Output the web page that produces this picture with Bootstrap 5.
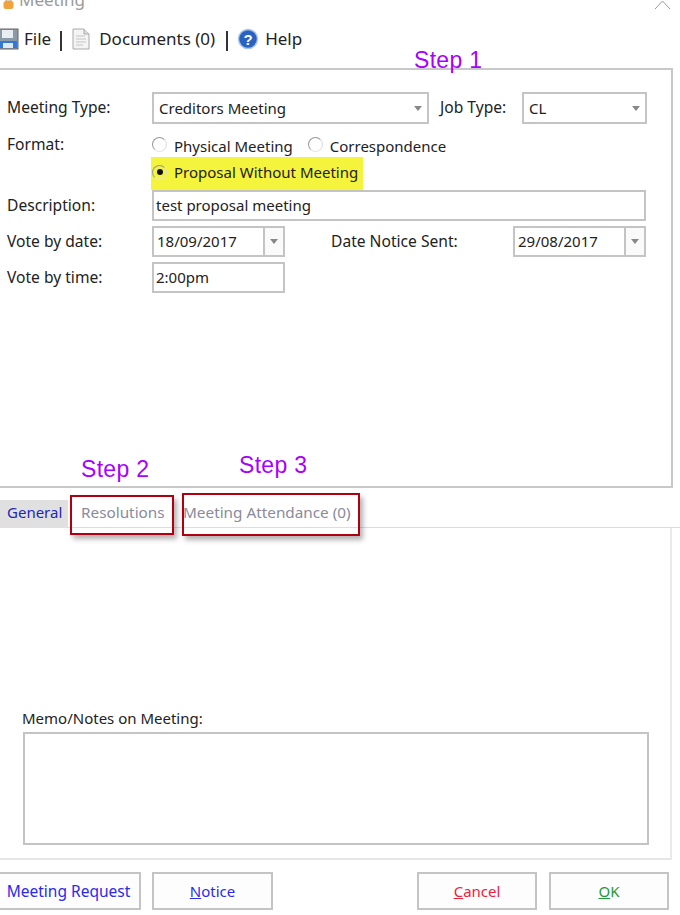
<!DOCTYPE html>
<html lang="en">
<head>
    <meta charset="UTF-8">
    <title>Meeting</title>
    <link href="https://cdn.jsdelivr.net/npm/bootstrap@5.3.0/dist/css/bootstrap.min.css" rel="stylesheet">
    <style>
        body {
            width: 680px;
            height: 915px;
            overflow: hidden;
            position: relative;
            background: #fff;
            color: #222;
            font-family: "Noto Sans", "DejaVu Sans", sans-serif;
            font-size: 15px;
            line-height: 20px;
        }
        .title-row { height: 25px; overflow: hidden; position: relative; }
        .title-icon { margin-left: 3px; margin-top: -2px; }
        .title-text { font-size: 17px; color: #9a9a9a; line-height: 20px; margin-top: -10px; margin-left: 5px; }
        .close-mark { position: absolute; left: 654px; top: -8px; }
        .tool-row { height: 43px; padding-top: 2px; font-size: 17px; gap: 5px; }
        .tool-sep { width: 2px; height: 20px; background: #333; margin: 4px 4px 0 4px; }
        .tool-sep-wide { margin-left: 6px; }
        .help-label { margin-left: 6px; }
        .top-panel { height: 420px; width: 675px; margin-left: -2px; padding: 22px 0 0 7px; border: 2px solid #c8c8c8; }
        .field-label { width: 145px; flex-shrink: 0; font-size: 15.6px; margin-top: -2px; }
        .label-high { margin-top: -3px; }
        .win-field {
            border: 2px solid #c4c4c4;
            border-radius: 0;
            height: 32px;
            padding: 2px 2px 4px 2px;
            font-size: 15px;
            line-height: 22px;
            color: #222;
            background: #fff;
        }
        .win-select {
            background-image: none;
            display: flex;
            align-items: center;
            justify-content: space-between;
            padding: 0 5px 0 5px;
        }
        .arrow-down { width: 0; height: 0; border: 4px solid transparent; border-top: 5px solid #888; border-bottom: 0; }
        .top-type { width: 277px; }
        .job-label { width: 82px; margin-left: 11px; font-size: 15.6px; margin-top: -3px; }
        .job-type { width: 125px; }
        .format-top { height: 25px; padding-top: 4px; margin-top: 8px; }
        .format-label { margin-top: -2px; }
        .radio-mark { width: 15px; height: 15px; border-radius: 50%; border: 1.5px solid #999; border-right-color: #ddd; border-bottom-color: #e4e4e4; display: inline-flex; align-items: center; justify-content: center; flex-shrink: 0; margin-right: 7px; margin-top: -3px; background: #fff; }
        .radio-on { background: transparent; }
        .radio-on::after { content: ""; width: 6px; height: 6px; border-radius: 50%; background: #111; }
        .radio-gap { margin-right: 15px; }
        .format-pick { height: 33px; width: 212px; margin-left: -1px; padding-left: 1px; background: #f4f43c; }
        .pick-text { margin-top: -3px; }
        .desc-field { width: 494px; height: 31px; }
        .date-row { height: 31px; margin-top: 5px; }
        .date-row .win-field { height: 31px; }
        .date-field { width: 133px; padding: 0; display: flex; align-items: center; }
        .date-value { flex: 1; padding-left: 3px; margin-top: -2px; }
        .date-drop { width: 20px; height: 100%; border-left: 2px solid #c4c4c4; background: #fafafa; display: flex; align-items: center; justify-content: center; }
        .notice-label { margin-left: 46px; width: 182px; font-size: 15.6px; margin-top: -2px; }
        .time-field { width: 133px; }
        .tab-strip { height: 40px; padding-top: 12px; border-bottom: 1px solid #ddd; }
        .tab-item { height: 28px; line-height: 25px; padding: 0; color: #8a8a9c; font-size: 15.3px; }
        .tab-active { width: 68px; padding-left: 7px; background: #e0e0e0; color: #2424b8; font-size: 15px; }
        .tab-res { margin-left: 13px; width: 102px; }
        .lower-panel { height: 332px; width: 672px; border-right: 2px solid #eaeaea; border-bottom: 2px solid #e6e6e6; padding: 180px 0 0 22px; }
        .memo-label { height: 24px; line-height: 20px; }
        .memo-box { display: block; width: 626px; height: 113px; margin-left: 1px; resize: none; padding: 3px; }
        .foot-row { padding-top: 12px; height: 50px; }
        .win-btn {
            height: 38px;
            width: 121px;
            border: 2px solid #c4c4c4;
            border-radius: 0;
            background: #fdfdfd;
            font-size: 15px;
            padding: 0 0 1px 0;
            line-height: 30px;
        }
        .btn-blue { color: #2a2af0; }
        .btn-red { color: #f0203c; }
        .btn-green { color: #1c9a3c; }
        .meeting-btn { margin-left: -4px; width: 145px; font-size: 15.5px; }
        .notice-btn { margin-left: 11px; }
        .cancel-btn { margin-left: 144px; width: 120px; }
        .ok-btn { margin-left: 12px; width: 120px; }
        .step-note { position: absolute; font-family: "Liberation Sans", Arial, sans-serif; font-size: 23px; line-height: 26px; letter-spacing: .3px; color: #a900ff; }
        .step-one { left: 414px; top: 47px; }
        .step-two { left: 81px; top: 456px; }
        .step-three { left: 239px; top: 452px; }
        .mark-box { position: absolute; border: 2px solid #b00010; box-shadow: 3px 4px 5px rgba(0,0,0,.3); }
        .mark-res { left: 70px; top: 495px; width: 104px; height: 40px; }
        .mark-att { left: 182px; top: 493px; width: 178px; height: 43px; }
    </style>
</head>
<body>

    <div class="title-row">
        <div class="d-flex align-items-start">
            <svg class="title-icon" width="11" height="12" viewBox="0 0 11 12"><path d="M3 4 V2 H8 V4" fill="none" stroke="#c9a06a"/><rect x="0.5" y="3" width="10" height="8" rx="2.5" fill="#f0a23c"/></svg>
            <div class="title-text">Meeting</div>
        </div>
        <svg class="close-mark" width="18" height="18" viewBox="0 0 18 18"><path d="M1 17 L8.5 9 L16 17" fill="none" stroke="#999" stroke-width="1"/></svg>
    </div>

    <div class="tool-row d-flex align-items-start">
        <div class="d-flex align-items-center">
            <svg width="20" height="24" viewBox="0 0 20 24">
                <rect x="-2" y="2" width="20" height="20" fill="#8c9aa8" stroke="#666"/>
                <rect x="2" y="3" width="11" height="8" fill="#e8edf2"/>
                <rect x="0" y="14" width="17" height="7" fill="#2f78d8"/>
                <rect x="3" y="16" width="10" height="5" fill="#dfe9f5"/>
            </svg>
            <span class="ms-1">File</span>
        </div>
        <div class="tool-sep"></div>
        <div class="d-flex align-items-center">
            <svg width="20" height="24" viewBox="0 0 20 24">
                <path d="M2 2 H13 L18 7 V22 H2 Z" fill="#f4f4f4" stroke="#aaa"/>
                <path d="M13 2 V7 H18" fill="#ddd" stroke="#aaa"/>
                <path d="M5 9 H14 M5 12 H15 M5 15 H15 M5 18 H12" stroke="#c4c4c4" fill="none"/>
            </svg>
            <span class="ms-2">Documents (0)</span>
        </div>
        <div class="tool-sep tool-sep-wide"></div>
        <div class="d-flex align-items-center">
            <svg width="22" height="24" viewBox="0 0 22 24">
                <circle cx="11" cy="12" r="9.5" fill="#2a62c0" stroke="#a9c4ea" stroke-width="1.5"/>
                <text x="11" y="17.5" text-anchor="middle" font-family="Liberation Sans" font-weight="700" font-size="15" fill="#fff">?</text>
            </svg>
            <span class="help-label">Help</span>
        </div>
    </div>

    <div class="top-panel">
        <div class="d-flex align-items-center">
            <div class="field-label label-high">Meeting Type:</div>
            <div class="form-select win-field win-select top-type"><span>Creditors Meeting</span><span class="arrow-down"></span></div>
            <div class="job-label">Job Type:</div>
            <div class="form-select win-field win-select job-type"><span>CL</span><span class="arrow-down"></span></div>
        </div>
        <div class="d-flex format-top">
            <div class="field-label format-label">Format:</div>
            <div class="d-flex align-items-center align-self-start">
                <span class="radio-mark"></span><span class="radio-gap">Physical Meeting</span>
                <span class="radio-mark"></span><span>Correspondence</span>
            </div>
        </div>
        <div class="d-flex">
            <div class="field-label"></div>
            <div class="format-pick d-flex align-items-center"><span class="radio-mark radio-on"></span><span class="pick-text">Proposal Without Meeting</span></div>
        </div>
        <div class="d-flex align-items-center">
            <div class="field-label">Description:</div>
            <input class="form-control win-field desc-field" value="test proposal meeting">
        </div>
        <div class="d-flex align-items-center date-row">
            <div class="field-label">Vote by date:</div>
            <div class="form-control win-field date-field"><span class="date-value">18/09/2017</span><span class="date-drop"><span class="arrow-down"></span></span></div>
            <div class="notice-label">Date Notice Sent:</div>
            <div class="form-control win-field date-field"><span class="date-value">29/08/2017</span><span class="date-drop"><span class="arrow-down"></span></span></div>
        </div>
        <div class="d-flex align-items-center date-row">
            <div class="field-label">Vote by time:</div>
            <input class="form-control win-field time-field" value="2:00pm">
        </div>
    </div>

    <div class="tab-strip d-flex">
        <div class="tab-item tab-active">General</div>
        <div class="tab-item tab-res">Resolutions</div>
        <div class="tab-item">Meeting Attendance (0)</div>
    </div>

    <div class="lower-panel">
        <div class="memo-label">Memo/Notes on Meeting:</div>
        <textarea class="form-control win-field memo-box"></textarea>
    </div>

    <div class="foot-row d-flex">
        <button class="btn win-btn btn-blue meeting-btn">Meeting Request</button>
        <button class="btn win-btn btn-blue notice-btn"><u>N</u>otice</button>
        <button class="btn win-btn btn-red cancel-btn"><u>C</u>ancel</button>
        <button class="btn win-btn btn-green ok-btn"><u>O</u>K</button>
    </div>

    <div class="step-note step-one">Step 1</div>
    <div class="step-note step-two">Step 2</div>
    <div class="step-note step-three">Step 3</div>
    <div class="mark-box mark-res"></div>
    <div class="mark-box mark-att"></div>

</body>
</html>
